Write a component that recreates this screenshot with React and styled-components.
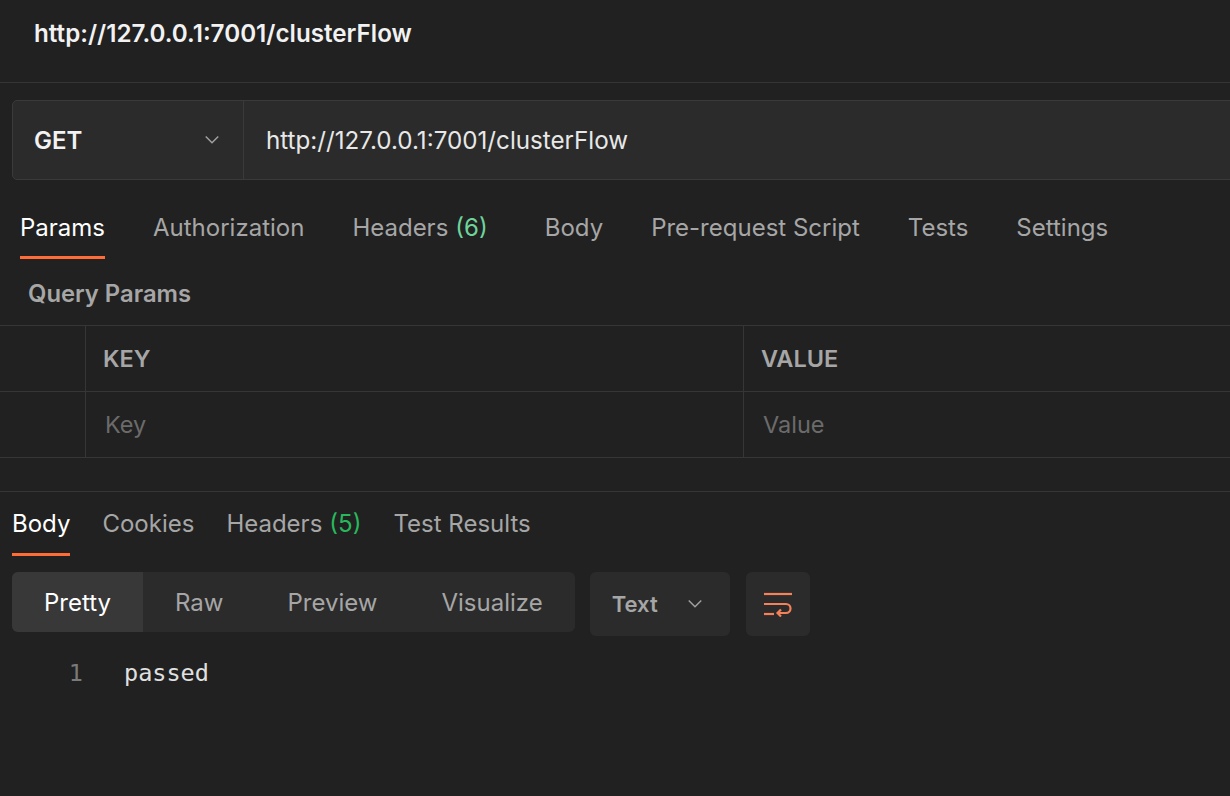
import React from "react";
import styled, { createGlobalStyle } from "styled-components";

const Global = createGlobalStyle`
  html, body { margin: 0; padding: 0; background: #212121; overflow: hidden; }
  body { font-family: Inter, "Noto Sans", sans-serif; color: #e6e6e6; }
  * { box-sizing: border-box; }
`;

const Page = styled.div`
  width: 1230px;
  height: 796px;
  background: #212121;
  overflow: hidden;
`;

const TitleBar = styled.div`
  height: 83px;
  padding: 0 34px;
  display: flex;
  align-items: center;
  padding-bottom: 15px;
  border-bottom: 1px solid #353535;
  font-size: 24.2px;
  font-weight: 600;
  color: #f2f2f2;
`;

const RequestBar = styled.div`
  margin: 17px -20px 0 12px;
  height: 80px;
  display: flex;
  border: 1px solid #3a3a3a;
  border-radius: 5px;
  background: #2b2b2b;
`;

const Method = styled.div`
  width: 231px;
  display: flex;
  align-items: center;
  justify-content: space-between;
  padding: 0 23px 0 21px;
  border-right: 1px solid #3a3a3a;
  font-size: 24px;
  font-weight: 600;
  color: #f2f2f2;
`;

const Url = styled.div`
  flex: 1;
  display: flex;
  align-items: center;
  padding-left: 22px;
  font-size: 24.2px;
  color: #e8e8e8;
`;

const Tabs = styled.div`
  display: flex;
  gap: ${(p) => p.$gap}px;
  padding-left: ${(p) => p.$left}px;
  margin-top: ${(p) => p.$top}px;
`;

const Tab = styled.div`
  font-size: 24px;
  line-height: 28px;
  padding-bottom: ${(p) => p.$pb}px;
  border-bottom: 3px solid ${(p) => (p.$active ? "#ff6c37" : "transparent")};
  color: ${(p) => (p.$active ? "#ffffff" : "#a6a6a6")};
  margin-right: ${(p) => p.$extra || 0}px;
  white-space: nowrap;
`;

const Count = styled.span`
  color: ${(p) => p.$color};
  margin-left: 7px;
`;

const SectionLabel = styled.div`
  margin: 21px 0 17px 28px;
  font-size: 23.8px;
  line-height: 28px;
  font-weight: 600;
  color: #a6a6a6;
`;

const Table = styled.div`
  display: grid;
  grid-template-columns: 86px 658px 1fr;
  border-top: 1px solid #363636;
`;

const Cell = styled.div`
  height: 66px;
  display: flex;
  align-items: center;
  padding-left: ${(p) => p.$pl || 17}px;
  border-bottom: 1px solid #363636;
  border-right: ${(p) => (p.$last ? "none" : "1px solid #363636")};
  font-size: 23.5px;
  font-weight: ${(p) => (p.$head ? 600 : 400)};
  color: ${(p) => (p.$head ? "#a6a6a6" : "#6b6b6b")};
`;

const Response = styled.div`
  margin-top: 33px;
  border-top: 1px solid #353535;
`;

const Toolbar = styled.div`
  display: flex;
  margin: 16px 0 0 12px;
  align-items: flex-start;
`;

const Segmented = styled.div`
  display: flex;
  height: 60px;
  border-radius: 6px;
  background: #2b2b2b;
  overflow: hidden;
  margin-right: 15px;
`;

const Segment = styled.div`
  display: flex;
  align-items: center;
  padding: 0 32px;
  font-size: 24px;
  background: ${(p) => (p.$active ? "#383838" : "transparent")};
  color: ${(p) => (p.$active ? "#ffffff" : "#a6a6a6")};
`;

const Dropdown = styled.div`
  width: 140px;
  height: 64px;
  border-radius: 6px;
  background: #2b2b2b;
  display: flex;
  align-items: center;
  justify-content: space-between;
  padding: 0 27px 0 22px;
  margin-right: 16px;
  font-size: 22px;
  font-weight: 600;
  color: #a6a6a6;
`;

const IconButton = styled.div`
  width: 64px;
  height: 64px;
  border-radius: 6px;
  background: #2b2b2b;
  display: flex;
  align-items: center;
  justify-content: center;
`;

const CodeLine = styled.div`
  display: flex;
  margin-top: 23px;
  font-family: "DejaVu Sans Mono", "Liberation Mono", monospace;
  font-size: 23.5px;
  line-height: 28px;
`;

const LineNo = styled.span`
  width: 83px;
  text-align: right;
  color: #7a7a7a;
`;

const Code = styled.span`
  margin-left: 41px;
  color: #e0e0e0;
`;

const Chevron = ({ color = "#a0a0a0", size = 16 }) => (
  <svg width={size} height={size * 0.6} viewBox="0 0 16 10">
    <polyline points="1.5,1.5 8,8 14.5,1.5" fill="none" stroke={color} strokeWidth="1.6" />
  </svg>
);

const WrapIcon = () => (
  <svg width="30" height="26" viewBox="0 0 30 26" fill="none" stroke="#f4815a" strokeWidth="2.2" strokeLinecap="butt">
    <line x1="1" y1="3" x2="29" y2="3" />
    <path d="M1 13 H23 a4.5 4.5 0 0 1 0 9 H15" />
    <polyline points="18,18.5 14.5,22 18,25.5" strokeLinejoin="miter" />
    <line x1="1" y1="23" x2="11" y2="23" />
  </svg>
);

export default function App() {
  return (
    <Page>
      <Global />
      <TitleBar>http://127.0.0.1:7001/clusterFlow</TitleBar>
      <RequestBar>
        <Method>
          GET
          <Chevron />
        </Method>
        <Url>http://127.0.0.1:7001/clusterFlow</Url>
      </RequestBar>

      <Tabs $gap={48} $left={20} $top={34}>
        <Tab $active $pb={14}>Params</Tab>
        <Tab $pb={14}>Authorization</Tab>
        <Tab $pb={14} $extra={9}>
          Headers<Count $color="#6fd49c">(6)</Count>
        </Tab>
        <Tab $pb={14}>Body</Tab>
        <Tab $pb={14}>Pre-request Script</Tab>
        <Tab $pb={14}>Tests</Tab>
        <Tab $pb={14}>Settings</Tab>
      </Tabs>

      <SectionLabel>Query Params</SectionLabel>
      <Table>
        <Cell />
        <Cell $head>KEY</Cell>
        <Cell $head $last>VALUE</Cell>
        <Cell />
        <Cell $pl={19}>Key</Cell>
        <Cell $last $pl={19}>Value</Cell>
      </Table>

      <Response>
        <Tabs $gap={32} $left={12} $top={18}>
          <Tab $active $pb={15}>Body</Tab>
          <Tab $pb={15}>Cookies</Tab>
          <Tab $pb={15}>
            Headers<Count $color="#28b85c">(5)</Count>
          </Tab>
          <Tab $pb={15}>Test Results</Tab>
        </Tabs>

        <Toolbar>
          <Segmented>
            <Segment $active>Pretty</Segment>
            <Segment>Raw</Segment>
            <Segment>Preview</Segment>
            <Segment>Visualize</Segment>
          </Segmented>
          <Dropdown>
            Text
            <Chevron />
          </Dropdown>
          <IconButton>
            <WrapIcon />
          </IconButton>
        </Toolbar>

        <CodeLine>
          <LineNo>1</LineNo>
          <Code>passed</Code>
        </CodeLine>
      </Response>
    </Page>
  );
}
